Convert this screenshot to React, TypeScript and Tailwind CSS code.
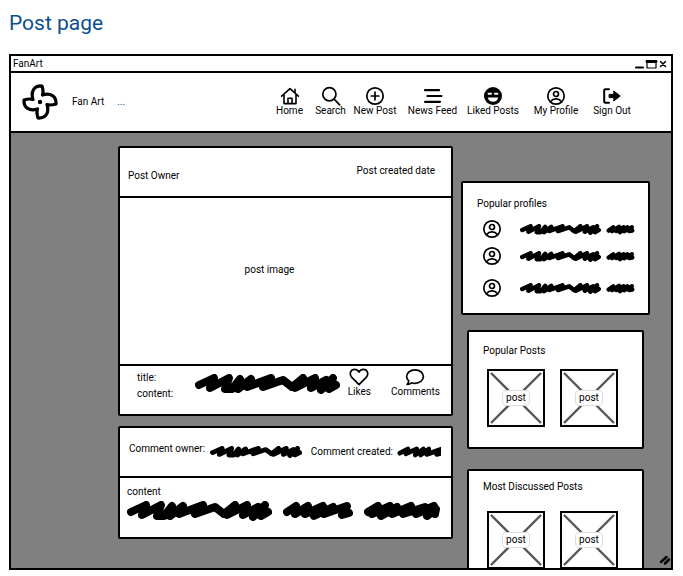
import React from "react";

type Item = { label: string; icon: React.ReactNode; box: string };

const line = {
  fill: "none",
  stroke: "currentColor",
  strokeWidth: 1.7,
  strokeLinecap: "round" as const,
  strokeLinejoin: "round" as const,
};

function Icon({ children }: { children: React.ReactNode }) {
  return (
    <svg viewBox="0 0 20 20" className="size-5 shrink-0" aria-hidden="true" {...line}>
      {children}
    </svg>
  );
}

function UserIcon() {
  return (
    <Icon>
      <circle cx="10" cy="10" r="8.2" />
      <circle cx="10" cy="8" r="2.5" />
      <path d="M4.6 15.4C6 13.6 7.8 12.9 10 12.9s4 .7 5.4 2.5" />
    </Icon>
  );
}

const items: Item[] = [
  {
    label: "Home",
    box: "w-[41px]",
    icon: (
      <Icon>
        <path d="M1.6 10.2 10 2.6l8.4 7.6M4 8.6v9h12v-9M8 17.4v-5.2h4v5.2M15 3.4v3.4" strokeWidth="1.6" />
      </Icon>
    ),
  },
  {
    label: "Search",
    box: "w-[41px]",
    icon: (
      <Icon>
        <circle cx="8.4" cy="8.2" r="6.6" />
        <path d="m13.2 13.2 5.4 5.6" />
      </Icon>
    ),
  },
  {
    label: "New Post",
    box: "w-[48px]",
    icon: (
      <Icon>
        <circle cx="10" cy="10" r="8.2" />
        <path d="M10 6.2v7.6M6.2 10h7.6" />
      </Icon>
    ),
  },
  {
    label: "News Feed",
    box: "w-[67px]",
    icon: (
      <Icon>
        <path d="M2 4.2h14M4.4 10h14M2 15.8h15" strokeWidth="2.2" />
      </Icon>
    ),
  },
  {
    label: "Liked Posts",
    box: "w-[54px]",
    icon: (
      <Icon>
        <circle cx="10" cy="10" r="9" fill="currentColor" stroke="none" />
        <path d="M5.6 7.8h2.4M12 7.8h2.4" stroke="white" strokeWidth="2" />
        <path d="M4.8 11.4h10.4c-.4 2.8-2.5 4.4-5.2 4.400s-4.8-1.600-5.200-4.400Z" fill="white" stroke="none" />
      </Icon>
    ),
  },
  { label: "My Profile", box: "w-[72px]", icon: <UserIcon /> },
  {
    label: "Sign Out",
    box: "w-[40px]",
    icon: (
      <Icon>
        <path d="M7 3.2H3.2a1 1 0 0 0-1 1v11.6a1 1 0 0 0 1 1H7" strokeWidth="2" />
        <path d="M7.4 8.4h4.4V5l6.400 5-6.400 5v-3.400H7.400Z" fill="currentColor" strokeWidth="1" />
      </Icon>
    ),
  },
];

const strokes = {
  long: {
    box: "0 0 145 20",
    d: "M4 11 19 4 15 14 34 4 30 15 37 15 45 5 43 15 56 5 52 13 76 4 68 13 88 6 97 13 108 4 100 14 120 4 116 14 131 6 126 16 138 4 134 15 141 11",
  },
  medium: {
    box: "0 0 70 20",
    d: "M4 11 13 5 12 13 25 5 22 13 40 5 31 15 50 6 41 13 64 5 59 14 66 12",
  },
  dense: {
    box: "0 0 76 20",
    d: "M4 11 14 5 8 13 26 5 17 15 33 6 28 13 47 5 39 13 61 6 52 13 70 5 63 15 72 8 71 13",
  },
  short: {
    box: "0 0 56 20",
    d: "M5 12 14 6 12 13 25 5 20 13 34 6 27 15 41 6 35 13 50 6 45 13 51 12",
  },
  cut: {
    box: "0 0 80 20",
    d: "M5 12 20 5 16 13 36 5 33 15 48 5 43 15 58 5 54 14 82 5 72 14 84 11",
  },
};

function Scribble({ kind, size }: { kind: keyof typeof strokes; size: string }) {
  const s = strokes[kind];
  return (
    <svg viewBox={s.box} preserveAspectRatio="none" className={`shrink-0 ${size}`} aria-hidden="true">
      <path d={s.d} {...line} strokeWidth="8" />
    </svg>
  );
}

function Logo() {
  return (
    <svg viewBox="0 0 36 36" className="size-9 shrink-0" aria-hidden="true" {...line} strokeWidth="3.2">
      <path d="M20 2C12 1.5 8.5 7.5 11 15.5 8 14.5 5 15 2 16 1.5 24 7.5 27.5 15.5 25 14.5 28 15 31 16 34 24 34.5 27.5 28.5 25 20.5 28 21.5 31 21 34 20 34.5 12 28.5 8.5 20.5 11 21.5 8 21 5 20 2Z" />
      <circle cx="18" cy="18" r="2.2" fill="currentColor" stroke="none" />
    </svg>
  );
}

function Placeholder() {
  return (
    <a href="#post" className="relative flex size-[58px] items-center justify-center border-2 border-black bg-white">
      <svg viewBox="0 0 54 54" className="absolute inset-0 size-full" aria-hidden="true">
        <path d="M2 2 52 52M52 2 2 52" stroke="#555" strokeWidth="2.4" />
      </svg>
      <span className="relative rounded-sm border border-[#ddd] bg-white px-[3px] py-px">post</span>
    </a>
  );
}

function PostsCard({ title, space }: { title: string; space: string }) {
  return (
    <section className={`mx-[6px] flex h-[119px] shrink-0 flex-col rounded-xs border-2 border-black bg-white pl-[14px] ${space}`}>
      <h2>{title}</h2>
      <div className="flex gap-[15px] pl-1">
        <Placeholder />
        <Placeholder />
      </div>
    </section>
  );
}

export default function App() {
  return (
    <div className="flex h-screen flex-col bg-white pb-[6px] pl-[9px] pr-[10px] pt-[10px] font-['Roboto','Noto_Sans',sans-serif] text-[10px] leading-3 text-black">
      <h1 className="mb-[18px] text-[21px] leading-[26px] text-[#0b4f91]">Post page</h1>
      <div className="relative flex min-h-0 flex-1 flex-col overflow-hidden border-2 border-black bg-[#808080]">
        <div className="flex h-[17px] shrink-0 items-center border-b-2 border-black bg-white pl-0.5 pr-1">
          <span className="flex-1">FanArt</span>
          <svg viewBox="0 0 32 10" className="h-[10px] w-8" aria-hidden="true" {...line}>
            <path d="M1 8.5h7" strokeWidth="2" />
            <path d="M12 1.5h9v7.5h-9Z" strokeWidth="1.2" />
            <path d="M12 2.5h9" strokeWidth="2.8" />
            <path d="m25.5 2.5 5 5m0-5-5 5" strokeWidth="1.5" />
          </svg>
        </div>
        <header className="flex h-[60px] shrink-0 items-center border-b-2 border-black bg-white pl-[11px] pr-[39px]">
          <Logo />
          <span className="ml-[14px]">Fan Art</span>
          <a href="#more" className="ml-[13px] text-[#0b4f91]">...</a>
          <nav className="ml-auto flex pb-0.5">
            {items.map((item) => (
              <a key={item.label} href="#nav" className={`flex flex-col items-center whitespace-nowrap ${item.box}`}>
                {item.icon}
                <span className="-mt-px">{item.label}</span>
              </a>
            ))}
          </nav>
        </header>
        <div className="flex min-h-0 flex-1 pl-[107px] pr-[21px]">
          <main className="flex min-w-0 flex-1 flex-col pt-[13px]">
            <article className="rounded-xs border-2 border-black bg-white">
              <div className="flex h-[50px] items-start justify-between border-b-2 border-black pl-2 pr-4">
                <span className="mt-[22px]">Post Owner</span>
                <span className="mt-[17px]">Post created date</span>
              </div>
              <div className="flex h-[168px] items-center justify-center border-b-2 border-black pr-[32px]">
                <span className="-mt-[22px]">post image</span>
              </div>
              <div className="flex h-[48px] items-start pl-[17px] pr-[11px]">
                <div className="flex w-[58px] flex-col gap-1 pt-[6px]">
                  <span>title:</span>
                  <span>content:</span>
                </div>
                <div className="flex-1 pt-2">
                  <Scribble kind="long" size="h-5 w-[145px]" />
                </div>
                <button type="button" className="mr-5 flex flex-col items-center pt-px">
                  <Icon>
                    <path d="M10 17.6 3 10.6C-.5 6.5 2 2.4 5.6 2.4c2 0 3.5 1.2 4.4 2.8.9-1.6 2.4-2.8 4.4-2.8 3.6 0 6.1 4.1 2.6 8.2Z" />
                  </Icon>
                  <span className="-mt-px">Likes</span>
                </button>
                <button type="button" className="flex flex-col items-center pt-px">
                  <Icon>
                    <path d="M2.2 17.4c1-1.500 1.500-2.200 1.500-3.500C2.300 12.600 1.600 11.200 1.600 9.600c0-3.800 3.800-6.800 8.400-6.800s8.400 3 8.400 6.800-3.800 6.800-8.400 6.800c-1.200 0-2.300-.2-3.400-.6-1.200 1.100-2.600 1.600-4.400 1.600Z" />
                  </Icon>
                  <span className="-mt-px">Comments</span>
                </button>
              </div>
            </article>
            <article className="mt-[10px] rounded-xs border-2 border-black bg-white">
              <div className="flex h-[50px] items-center border-b-2 border-black pl-[9px] pr-[10px]">
                <span className="w-[81px] pb-[6px]">Comment owner:</span>
                <Scribble kind="long" size="h-3 w-[92px]" />
                <span className="ml-auto mr-1 pb-px">Comment created:</span>
                <Scribble kind="cut" size="h-3 w-11" />
              </div>
              <div className="h-[59px] px-[7px] pt-2">
                <p>content</p>
                <div className="mt-[3px] flex gap-[11px]">
                  <Scribble kind="long" size="h-5 w-[145px]" />
                  <Scribble kind="medium" size="h-5 w-[70px]" />
                  <Scribble kind="dense" size="h-5 w-[76px]" />
                </div>
              </div>
            </article>
          </main>
          <aside className="ml-2 flex w-[189px] shrink-0 flex-col pt-[48px]">
            <section className="h-[134px] shrink-0 rounded-xs border-2 border-black bg-white pl-[14px] pt-[15px]">
              <h2>Popular profiles</h2>
              <ul className="pl-[5px] pt-[9px]">
                {["mb-[7px]", "mb-3", ""].map((space, i) => (
                  <li key={i} className={`flex items-center ${space}`}>
                    <UserIcon />
                    <span className="ml-[18px] flex gap-[5px] pt-px">
                      <Scribble kind="long" size="h-[11px] w-[81px]" />
                      <Scribble kind="short" size="h-[11px] w-[29px]" />
                    </span>
                  </li>
                ))}
              </ul>
            </section>
            <div className="mt-[15px] flex flex-col gap-5">
              <PostsCard title="Popular Posts" space="gap-3 pt-[13px]" />
              <PostsCard title="Most Discussed Posts" space="gap-[18px] pt-[10px]" />
            </div>
          </aside>
        </div>
        <svg viewBox="0 0 12 12" className="absolute bottom-0.5 right-0 size-3" aria-hidden="true" {...line}>
          <path d="M2 8 7.5 3M6 9.5l4-4" strokeWidth="2.5" />
        </svg>
      </div>
    </div>
  );
}
